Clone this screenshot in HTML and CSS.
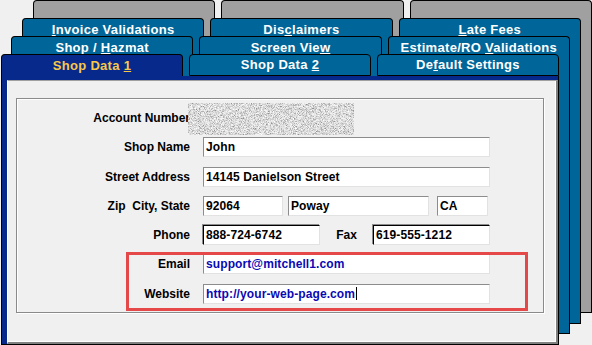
FILE: index.html
```html
<!DOCTYPE html>
<html lang="en">
<head>
    <meta charset="UTF-8">
    <title>Shop Data</title>
    <link rel="stylesheet" href="styles.css">
</head>
<body>
    <div class="stack">
        <div class="layer l0">
            <div class="tabs">
                <div class="tab"></div>
                <div class="tab"></div>
                <div class="tab"></div>
            </div>
            <div class="sheet"></div>
        </div>

        <div class="layer l1">
            <div class="tabs">
                <div class="tab"><u>I</u>nvoice Validations</div>
                <div class="tab">Dis<u>c</u>laimers</div>
                <div class="tab"><u>L</u>ate Fees</div>
            </div>
            <div class="sheet"></div>
        </div>

        <div class="layer l2">
            <div class="tabs">
                <div class="tab">Shop / <u>H</u>azmat</div>
                <div class="tab">Screen Vie<u>w</u></div>
                <div class="tab">Estimate/RO <u>V</u>alidations</div>
            </div>
            <div class="sheet"></div>
        </div>

        <div class="layer l3">
            <div class="tabs">
                <div class="tab active">Shop Data <u>1</u></div>
                <div class="tab">Shop Data <u>2</u></div>
                <div class="tab">De<u>f</u>ault Settings</div>
            </div>
            <div class="sheet">
                <div class="panel">
                    <div class="group">
                        <div class="label">Account Number</div>
                        <div></div>

                        <div class="label">Shop Name</div>
                        <div class="field">John</div>

                        <div class="label">Street Address</div>
                        <div class="field">14145 Danielson Street</div>

                        <div class="label">Zip&nbsp; City, State</div>
                        <div class="line">
                            <div class="field w-zip">92064</div>
                            <div class="field w-city">Poway</div>
                            <div class="field w-state">CA</div>
                        </div>

                        <div class="label">Phone</div>
                        <div class="line spread">
                            <div class="field dark w-phone">888-724-6742</div>
                            <div class="label">Fax</div>
                            <div class="field dark w-phone">619-555-1212</div>
                        </div>

                        <div class="label">Email</div>
                        <div class="field link">support@mitchell1.com</div>

                        <div class="label">Website</div>
                        <div class="field link">http://your-web-page.com<span class="caret"></span></div>

                        <!-- blurred account number -->
                        <div class="noise">
                            <svg width="166" height="32">
                                <filter id="speckle" x="0" y="0" width="100%" height="100%">
                                    <feTurbulence type="fractalNoise" baseFrequency="1.4" numOctaves="2" seed="7"/>
                                    <feColorMatrix type="matrix" values="1 0 0 0 0  1 0 0 0 0  1 0 0 0 0  0 0 0 0 1"/>
                                    <feComponentTransfer>
                                        <feFuncR type="discrete" tableValues="0.15 0.3 0.45 0.62 0.78 0.9 1 1"/>
                                        <feFuncG type="discrete" tableValues="0.15 0.3 0.45 0.62 0.78 0.9 1 1"/>
                                        <feFuncB type="discrete" tableValues="0.15 0.3 0.45 0.62 0.78 0.9 1 1"/>
                                    </feComponentTransfer>
                                </filter>
                                <rect width="166" height="32" filter="url(#speckle)"/>
                            </svg>
                        </div>

                        <div class="highlight"></div>
                    </div>
                </div>
            </div>
        </div>
    </div>
</body>
</html>
```

FILE: styles.css
```css
body {
    margin: 0;
    background: #f0f0f0;
    font-family: "Liberation Sans", Arial, sans-serif;
    overflow: hidden;
}
.stack {
    display: grid;
    width: 592px;
    height: 345px;
}
.layer {
    grid-area: 1 / 1;
    align-self: start;
    justify-self: start;
    display: flex;
    flex-direction: column;
    width: 559px;
    --c: #006699;
}
.l0 {
    margin: 0 0 0 33px;
    height: 313px;
    --c: #a0a0a0;
}
.l1 {
    margin: 18px 0 0 22px;
    height: 306px;
}
.l2 {
    margin: 36px 0 0 11px;
    height: 298px;
}
.l3 {
    margin: 54px 0 0 1px;
    height: 291px;
    width: 558px;
}
.tabs {
    display: flex;
    gap: 6px;
    height: 22px;
    flex: none;
}
.tab {
    flex: 1;
    box-sizing: border-box;
    background: var(--c);
    border: 1px solid #000;
    border-bottom: none;
    border-radius: 4px 4px 0 0;
    color: #fff;
    font-size: 13px;
    font-weight: bold;
    line-height: 21px;
    letter-spacing: 0.3px;
    text-align: center;
    white-space: nowrap;
}
.sheet {
    flex: 1;
    background: var(--c);
    border: 1px solid #000;
    border-top: none;
}
.l3 .tab {
    border-bottom: 1px solid #000;
    line-height: 20px;
}
.l3 .tab.active {
    background: #07298c;
    border-bottom: none;
    line-height: 21px;
    color: #f8c848;
}
.l3 .sheet {
    display: flex;
    background: #07298c;
    padding: 4px 0 0 5px;
}
.panel {
    flex: 1;
    background: #f0f0f0;
    border-top: 1px solid #a0a0a0;
    border-left: 1px solid #fff;
    border-right: 2px solid #808080;
    border-bottom: 2px solid #808080;
    box-shadow: inset -1px -1px #fff;
    padding: 17px 0 0 8px;
}
.group {
    position: relative;
    box-sizing: border-box;
    width: 528px;
    height: 215px;
    border: 1px solid #8a8a8a;
    box-shadow: inset 1px 1px #fff, 1px 1px #fff;
    padding-top: 9px;
    display: grid;
    grid-template-columns: 173px 287px;
    column-gap: 13px;
    grid-auto-rows: 20px;
    row-gap: 9.3px;
}
.label {
    text-align: right;
    font-size: 12px;
    font-weight: bold;
    line-height: 20px;
    color: #000;
    white-space: nowrap;
}
.field {
    box-sizing: border-box;
    height: 20px;
    background: #fff;
    border: 1px solid;
    border-color: #8c8c8c #e2e2e2 #e2e2e2 #8c8c8c;
    padding: 0 2px;
    font-size: 12px;
    font-weight: bold;
    line-height: 18px;
    letter-spacing: 0.1px;
    white-space: nowrap;
    overflow: hidden;
}
.field.dark {
    border-color: #000 #e2e2e2 #e2e2e2 #000;
    box-shadow: -1px -1px #8c8c8c;
}
.field.link {
    color: #0a0ab4;
}
.line {
    display: flex;
}
.spread {
    justify-content: space-between;
    align-items: center;
}
.w-zip {
    width: 80px;
}
.w-city {
    width: 141px;
    margin-left: 5px;
}
.w-state {
    width: 51px;
    margin-left: 8px;
}
.w-phone {
    width: 117px;
}
.caret {
    display: inline-block;
    width: 1px;
    height: 13px;
    background: #000;
    vertical-align: -2px;
    margin-left: 1px;
}
.noise {
    position: absolute;
    left: 171px;
    top: 4px;
    width: 166px;
    height: 32px;
}
.noise svg {
    display: block;
}
.highlight {
    position: absolute;
    left: 109px;
    top: 153px;
    width: 402px;
    height: 59px;
    box-sizing: border-box;
    border: 3px solid #e54848;
}
```
